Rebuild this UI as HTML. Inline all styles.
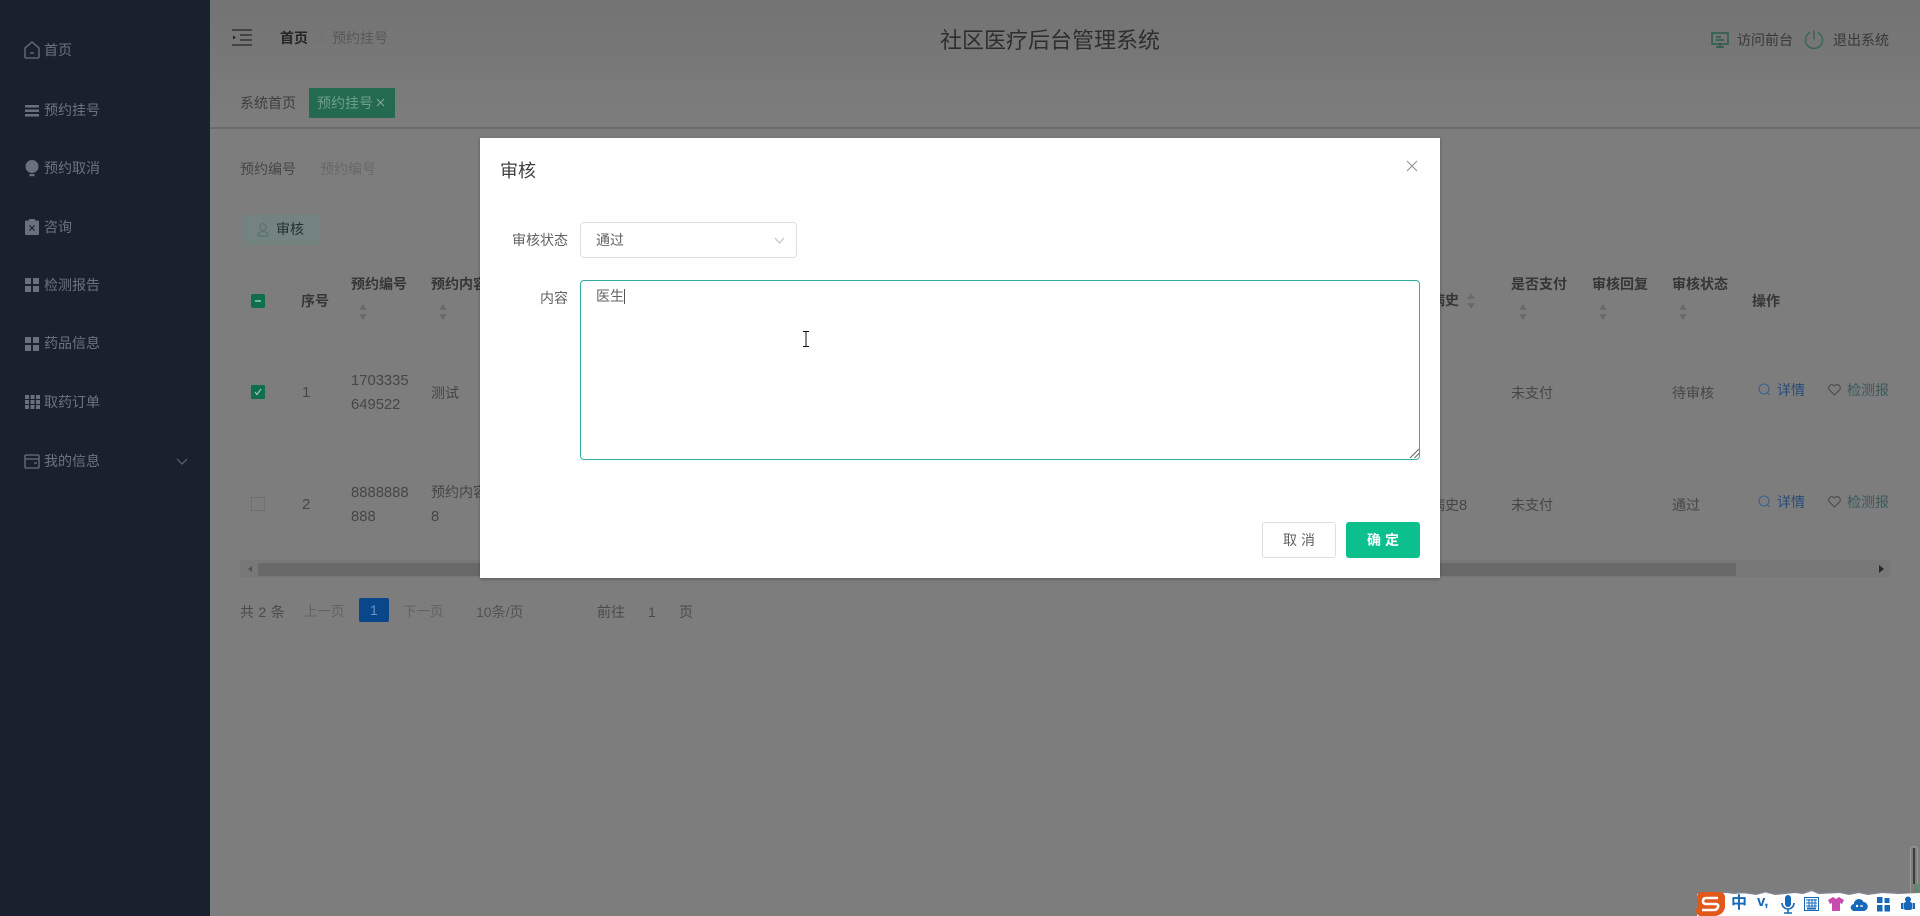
<!DOCTYPE html>
<html lang="zh-CN">
<head>
<meta charset="utf-8">
<title>社区医疗后台管理系统</title>
<style>
html,body{margin:0;padding:0;width:1920px;height:916px;overflow:hidden;background:#7d7d7d}
body{position:relative;font-family:"Liberation Sans","Noto Sans CJK SC",sans-serif;font-size:14px;color:#444}
.t{position:absolute;white-space:nowrap;line-height:20px;height:20px;filter:blur(.35px)}
.b{position:absolute;box-sizing:border-box}
svg{position:absolute;overflow:visible}
.nav{color:#6d737d;left:44px}
.th{font-weight:700;color:#363636}
.td{color:#464646}
.num{font-size:14.8px}
.sort{position:absolute;width:8px;height:16px}
.sort:before,.sort:after{content:"";position:absolute;left:0;border-left:4px solid transparent;border-right:4px solid transparent}
.sort:before{top:0;border-bottom:6px solid #6a6a6a}
.sort:after{bottom:0;border-top:6px solid #6a6a6a}
.lnk{color:#264b7c}
.lnk2{color:#395b59}
</style>
</head>
<body>

<!-- header / background -->
<div class="b" style="left:210px;top:0;width:1710px;height:128px;background:linear-gradient(#737373,#7d7d7d)"></div>
<div class="b" style="left:210px;top:127px;width:1710px;height:2px;background:#6c6c6c"></div>

<!-- sidebar -->
<div class="b" style="left:0;top:0;width:210px;height:916px;background:#19212e"></div>

<svg style="left:24px;top:41px" width="16" height="18" viewBox="0 0 16 18" fill="none" stroke="#6b717b" stroke-width="1.3"><path d="M1 7L8 1l7 6v9a1 1 0 0 1-1 1H2a1 1 0 0 1-1-1z"/><path d="M6 12h4"/></svg>
<div class="t nav" style="top:40px">首页</div>
<svg style="left:25px;top:105px" width="14" height="12" viewBox="0 0 14 12" fill="#6b717b"><rect y="0" width="14" height="2.5"/><rect y="4.5" width="14" height="2.5"/><rect y="9" width="14" height="2.5"/></svg>
<div class="t nav" style="top:100px">预约挂号</div>
<svg style="left:25px;top:160px" width="14" height="17" viewBox="0 0 14 17" fill="#6b717b"><circle cx="7" cy="6.5" r="6.5"/><rect x="4.5" y="14" width="5" height="2.2"/></svg>
<div class="t nav" style="top:158px">预约取消</div>
<svg style="left:25px;top:219px" width="14" height="16" viewBox="0 0 14 16"><rect y="1.5" width="14" height="14.5" rx="1" fill="#6b717b"/><rect x="4" y="0" width="6" height="3" fill="#6b717b"/><path d="M4.5 6.5l5 5m0-5l-5 5" stroke="#19212e" stroke-width="1.2"/></svg>
<div class="t nav" style="top:217px">咨询</div>
<svg style="left:25px;top:278px" width="14" height="14" viewBox="0 0 14 14" fill="#6b717b"><rect width="6" height="6"/><rect x="8" width="6" height="6"/><rect y="8" width="6" height="6"/><rect x="8" y="8" width="6" height="6"/></svg>
<div class="t nav" style="top:275px">检测报告</div>
<svg style="left:25px;top:337px" width="14" height="14" viewBox="0 0 14 14" fill="#6b717b"><rect width="6" height="6"/><rect x="8" width="6" height="6"/><rect y="8" width="6" height="6"/><rect x="8" y="8" width="6" height="6"/></svg>
<div class="t nav" style="top:333px">药品信息</div>
<svg style="left:25px;top:395px" width="15" height="14" viewBox="0 0 15 14" fill="#6b717b"><rect width="4" height="4"/><rect x="5.5" width="4" height="4"/><rect x="11" width="4" height="4"/><rect y="5" width="4" height="4"/><rect x="5.5" y="5" width="4" height="4"/><rect x="11" y="5" width="4" height="4"/><rect y="10" width="4" height="4"/><rect x="5.5" y="10" width="4" height="4"/><rect x="11" y="10" width="4" height="4"/></svg>
<div class="t nav" style="top:392px">取药订单</div>
<svg style="left:24px;top:454px" width="16" height="15" viewBox="0 0 16 15" fill="none" stroke="#6b717b" stroke-width="1.3"><rect x="1" y="1" width="14" height="13" rx="1"/><path d="M1 5h14M10 9h3"/></svg>
<div class="t nav" style="top:451px">我的信息</div>
<svg style="left:176px;top:458px" width="12" height="7" viewBox="0 0 12 7" fill="none" stroke="#5f656f" stroke-width="1.2"><path d="M1 1l5 5 5-5"/></svg>

<!-- top bar -->
<svg style="left:232px;top:29px" width="20" height="17" viewBox="0 0 20 17" fill="none" stroke="#262626" stroke-width="1.2"><path d="M0 1h20M8 6h12M8 11h12M0 16h20"/><path d="M1 6.5l3 2-3 2z" fill="#262626" stroke="none"/></svg>
<div class="t" style="left:280px;top:28px;font-weight:700;color:#252525">首页</div>
<div class="t" style="left:319px;top:28px;color:#707070">/</div>
<div class="t" style="left:332px;top:28px;color:#585858">预约挂号</div>
<div class="t" style="left:940px;top:26px;height:30px;line-height:30px;font-size:22px;color:#2e2e2e">社区医疗后台管理系统</div>

<svg style="left:1711px;top:32px" width="18" height="16" viewBox="0 0 18 16" fill="none" stroke="#255a48" stroke-width="1.4"><rect x="1" y="1" width="16" height="11"/><path d="M5 15h8M9 12v3M5 5h5M5 8h8"/></svg>
<div class="t" style="left:1737px;top:30px;color:#383838">访问前台</div>
<svg style="left:1804px;top:30px" width="20" height="20" viewBox="0 0 20 20" fill="none" stroke="#3a6558" stroke-width="1.5"><path d="M6 2.5A8.5 8.5 0 1 0 14 2.5"/><path d="M10 .5v9"/></svg>
<div class="t" style="left:1833px;top:30px;color:#383838">退出系统</div>

<!-- tabs -->
<div class="t" style="left:240px;top:93px;color:#3e3e3e">系统首页</div>
<div class="b" style="left:309px;top:88px;width:86px;height:30px;background:#236a50"></div>
<div class="t" style="left:317px;top:93px;color:#6f9d8d">预约挂号</div>
<svg style="left:376px;top:98px" width="9" height="9" viewBox="0 0 9 9" stroke="#80a898" stroke-width="1.1"><path d="M1 1l7 7m0-7l-7 7"/></svg>

<!-- search -->
<div class="t" style="left:240px;top:159px;color:#464646">预约编号</div>
<div class="t" style="left:320px;top:159px;color:#686868">预约编号</div>
<div class="b" style="left:243px;top:215px;width:77px;height:30px;background:#73837f;border-radius:3px"></div>
<svg style="left:257px;top:223px" width="12" height="14" viewBox="0 0 12 14" fill="none" stroke="#5a6c6a" stroke-width="1"><circle cx="6" cy="4" r="3.2"/><path d="M1 13c0-3 2-4.5 5-4.5S11 10 11 13z"/></svg>
<div class="t" style="left:276px;top:219px;color:#263230">审核</div>

<!-- table header -->
<div class="b" style="left:251px;top:294px;width:14px;height:14px;background:#0f6e4b;border-radius:2px"></div>
<div class="b" style="left:255px;top:300px;width:6px;height:1.5px;background:#6fb598"></div>
<div class="t th" style="left:301px;top:291px">序号</div>
<div class="t th" style="left:351px;top:274px">预约编号</div>
<div class="sort" style="left:359px;top:304px"></div>
<div class="t th" style="left:431px;top:274px">预约内容</div>
<div class="sort" style="left:439px;top:304px"></div>
<div class="t th" style="left:1511px;top:274px">是否支付</div>
<div class="sort" style="left:1519px;top:304px"></div>
<div class="t th" style="left:1592px;top:274px">审核回复</div>
<div class="sort" style="left:1599px;top:304px"></div>
<div class="t th" style="left:1672px;top:274px">审核状态</div>
<div class="sort" style="left:1679px;top:304px"></div>
<div class="t th" style="left:1752px;top:291px">操作</div>
<div class="t th" style="left:1431px;top:290px">病史</div>
<div class="sort" style="left:1467px;top:293px"></div>

<!-- row 1 -->
<div class="b" style="left:251px;top:385px;width:14px;height:14px;background:#0f6e4b;border-radius:1px"></div>
<svg style="left:254px;top:388px" width="8" height="8" viewBox="0 0 8 8" fill="none" stroke="#98c8b4" stroke-width="1.2"><path d="M1 4l2 2.5L7 1"/></svg>
<div class="t td" style="left:302px;top:383px;font-size:15px">1</div>
<div class="t td num" style="left:351px;top:371px">1703335</div>
<div class="t td num" style="left:351px;top:395px">649522</div>
<div class="t td" style="left:431px;top:383px">测试</div>
<div class="t td" style="left:1511px;top:383px">未支付</div>
<div class="t td" style="left:1672px;top:383px">待审核</div>
<svg style="left:1758px;top:383px" width="13" height="14" viewBox="0 0 13 14" fill="none" stroke="#38608f" stroke-width="1"><circle cx="6" cy="6" r="5"/><path d="M9.5 10l2 2"/></svg>
<div class="t lnk" style="left:1777px;top:380px">详情</div>
<svg style="left:1828px;top:384px" width="13" height="12" viewBox="0 0 13 12" fill="none" stroke="#444949" stroke-width="1"><path d="M6.5 11L1.3 5.8A3 3 0 0 1 6.5 2a3 3 0 0 1 5.2 3.8z"/></svg>
<div class="t lnk2" style="left:1847px;top:380px">检测报</div>

<!-- row 2 -->
<div class="b" style="left:251px;top:497px;width:14px;height:14px;border:1px solid #6e6e6e;border-radius:1px"></div>
<div class="t td" style="left:302px;top:495px;font-size:15px">2</div>
<div class="t td num" style="left:351px;top:483px">8888888</div>
<div class="t td num" style="left:351px;top:507px">888</div>
<div class="t td" style="left:431px;top:482px">预约内容</div>
<div class="t td num" style="left:431px;top:507px">8</div>
<div class="t td" style="left:1431px;top:495px">病史<span class="num">8</span></div>
<div class="t td" style="left:1511px;top:495px">未支付</div>
<div class="t td" style="left:1672px;top:495px">通过</div>
<svg style="left:1758px;top:495px" width="13" height="14" viewBox="0 0 13 14" fill="none" stroke="#38608f" stroke-width="1"><circle cx="6" cy="6" r="5"/><path d="M9.5 10l2 2"/></svg>
<div class="t lnk" style="left:1777px;top:492px">详情</div>
<svg style="left:1828px;top:496px" width="13" height="12" viewBox="0 0 13 12" fill="none" stroke="#444949" stroke-width="1"><path d="M6.5 11L1.3 5.8A3 3 0 0 1 6.5 2a3 3 0 0 1 5.2 3.8z"/></svg>
<div class="t lnk2" style="left:1847px;top:492px">检测报</div>

<!-- scrollbar -->
<div class="b" style="left:240px;top:560px;width:1650px;height:17px;background:#787878"></div>
<div class="b" style="left:258px;top:563px;width:1478px;height:13px;background:#696969"></div>
<div class="b" style="left:248px;top:566px;border-top:3.5px solid transparent;border-bottom:3.5px solid transparent;border-right:4px solid #525252"></div>
<div class="b" style="left:1879px;top:565px;border-top:4px solid transparent;border-bottom:4px solid transparent;border-left:5px solid #2a2a2a"></div>

<!-- pagination -->
<div class="t" style="left:240px;top:602px;color:#4a4a4a;letter-spacing:.3px">共 2 条</div>
<div class="t" style="left:304px;top:602px;color:#626262;font-size:13.5px">上一页</div>
<div class="b" style="left:359px;top:598px;width:30px;height:24px;background:#09478a;border-radius:2px"></div>
<div class="t" style="left:370px;top:600px;color:#6a93c0">1</div>
<div class="t" style="left:403px;top:602px;color:#626262;font-size:13.5px">下一页</div>
<div class="t" style="left:476px;top:602px;color:#525252">10条/页</div>
<div class="t" style="left:597px;top:602px;color:#4a4a4a">前往</div>
<div class="t" style="left:648px;top:602px;color:#4a4a4a">1</div>
<div class="t" style="left:679px;top:602px;color:#4a4a4a">页</div>

<!-- dialog -->
<div class="b" style="left:480px;top:138px;width:960px;height:440px;background:#fff;box-shadow:0 1px 3px rgba(0,0,0,.3)"></div>
<div class="t" style="left:500px;top:158px;height:26px;line-height:26px;font-size:18px;color:#404040">审核</div>
<svg style="left:1406px;top:160px" width="12" height="12" viewBox="0 0 12 12" stroke="#8f8f8f" stroke-width="1"><path d="M1 1l10 10M11 1L1 11"/></svg>
<div class="t" style="left:512px;top:230px;color:#606266">审核状态</div>
<div class="b" style="left:580px;top:222px;width:217px;height:36px;border:1px solid #dcdfe6;border-radius:4px;background:#fff"></div>
<div class="t" style="left:596px;top:230px;color:#606266">通过</div>
<svg style="left:774px;top:237px" width="11" height="7" viewBox="0 0 11 7" fill="none" stroke="#c0c4cc" stroke-width="1.2"><path d="M1 1l4.5 5L10 1"/></svg>
<div class="t" style="left:540px;top:288px;color:#606266">内容</div>
<div class="b" style="left:580px;top:280px;width:840px;height:180px;border:1px solid #30b0a0;border-radius:4px;background:#fff"></div>
<div class="t" style="left:596px;top:286px;color:#606266">医生</div>
<div class="b" style="left:624px;top:289px;width:1px;height:15px;background:#555"></div>
<svg style="left:1410px;top:449px" width="9" height="9" viewBox="0 0 9 9" stroke="#666" stroke-width="1"><path d="M0 9l9-9M4.5 9L9 4.5"/></svg>
<svg style="left:802px;top:331px" width="8" height="16" viewBox="0 0 8 16" fill="none" stroke="#111" stroke-width="1"><path d="M1 .5h6M4 .5v15M1 15.5h6"/></svg>
<div class="b" style="left:1262px;top:522px;width:74px;height:36px;border:1px solid #dcdfe6;border-radius:3px;background:#fff"></div>
<div class="t" style="left:1283px;top:530px;color:#606266;letter-spacing:4px">取消</div>
<div class="b" style="left:1346px;top:522px;width:74px;height:36px;border-radius:3px;background:#0bc08d"></div>
<div class="t" style="left:1367px;top:530px;color:#fff;letter-spacing:4px;font-weight:700">确定</div>

<!-- IME toolbar -->
<svg style="left:1697px;top:889px" width="223" height="27" viewBox="0 0 223 27"><path d="M0 27V5l30-1 7 1 10-1 12 2 10-3 9 3 20-2 8 1 9-3 7 3 21-1 9 2 10-2 9 2 14-2 16 1 22-1V27z" fill="#fff"/><path d="M20 3l30 1 10 1 8-2 9 2 20-2 8 1 9-3 7 3 21-1 9 2 10-2 9 2 14-2 20 1" fill="none" stroke="#7f8a9c" stroke-width="1.5" opacity=".6"/></svg>
<svg style="left:1696px;top:892px" width="30" height="24" viewBox="0 0 30 24"><path d="M5 0h19a5 5 0 0 1 5 5v9c0 6-5 10-11 10H5a5 5 0 0 1-4-8V5a5 5 0 0 1 4-5z" fill="#e2571a"/><path d="M22 6H10q-3 0 -3 3t3 3h9q4 0 3 3t-4 3H6" fill="none" stroke="#fff" stroke-width="2.6"/></svg>
<div class="t" style="left:1731px;top:893px;font-size:16px;line-height:22px;font-weight:700;color:#1668b8">中</div>
<div class="t" style="left:1757px;top:892px;font-size:15px;line-height:20px;font-weight:700;color:#1668b8">v,</div>
<svg style="left:1781px;top:895px" width="14" height="20" viewBox="0 0 14 20"><rect x="4" y="0" width="6" height="12" rx="3" fill="#1668b8"/><path d="M1 8a6 6 0 0 0 12 0M7 14v4M3 18h8" fill="none" stroke="#1668b8" stroke-width="1.6"/></svg>
<svg style="left:1804px;top:897px" width="15" height="14" viewBox="0 0 15 14"><rect x=".5" y=".5" width="14" height="13" fill="#fff" stroke="#1668b8"/><path d="M2 3h11M2 6h11M2 9h11M5 2v8M8 2v8M11 2v8" stroke="#1668b8" stroke-width="1"/><rect x="3" y="10.5" width="9" height="2" fill="#1668b8"/></svg>
<svg style="left:1828px;top:896px" width="16" height="16" viewBox="0 0 16 16"><path d="M5 1l3 2 3-2 5 3-2 4-2-1v8H4V7L2 8 0 4z" fill="#c84bb0"/></svg>
<svg style="left:1851px;top:896px" width="16" height="15" viewBox="0 0 16 15"><path d="M3.5 15a3.5 3.5 0 0 1-.6-7A5 5 0 0 1 12.5 6a4.5 4.5 0 0 1-.5 9z" fill="#1668b8"/><circle cx="6" cy="10" r="1.2" fill="#fff"/><rect x="9" y="9.4" width="3" height="1.2" fill="#fff"/></svg>
<svg style="left:1877px;top:897px" width="13" height="15" viewBox="0 0 13 15" fill="#1668b8"><rect width="5.5" height="6"/><rect x="7.5" y="1" width="5" height="5"/><rect y="8" width="5.5" height="6.5"/><rect x="7.5" y="8" width="5.5" height="6.5"/></svg>
<svg style="left:1901px;top:896px" width="14" height="16" viewBox="0 0 14 16" fill="#1668b8"><circle cx="7" cy="3.5" r="3"/><rect x="3" y="6" width="8" height="8" rx="2"/><rect x="0" y="7" width="2.5" height="6"/><rect x="11.5" y="7" width="2.5" height="6"/></svg>
<div class="b" style="left:1910px;top:846px;width:8px;height:47px;border:1px solid #9a9a9a;border-radius:4px 4px 0 0;border-bottom:0"></div>
<div class="b" style="left:1913px;top:848px;width:2px;height:36px;background:#3c3c3c"></div>
<div class="b" style="left:1915px;top:884px;width:3px;height:9px;background:#3f9c5c"></div>

</body>
</html>
